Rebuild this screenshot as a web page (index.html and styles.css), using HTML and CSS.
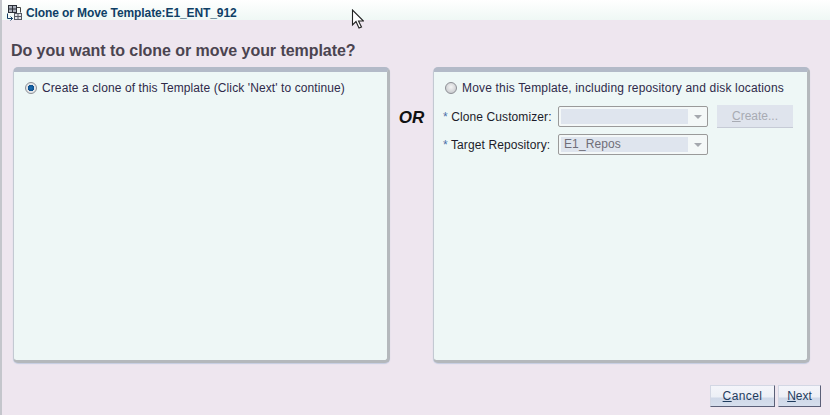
FILE: index.html
```html
<!DOCTYPE html>
<html lang="en">
<head>
    <meta charset="UTF-8">
    <title>Clone or Move Template</title>
    <link rel="stylesheet" href="styles.css">
</head>
<body>
    <div class="dialog">
        <div class="title-bar">
            <svg class="title-icon" width="17" height="16" viewBox="0 0 17 16">
                <rect x="2.5" y="0.5" width="8" height="7" fill="#aab0bb" stroke="#2b2f38"/>
                <path d="M2.5 4h8M6.5 .5v7" stroke="#2b2f38" fill="none"/>
                <rect x="8.5" y="8.5" width="7" height="6" fill="#e4e6ea" stroke="#555a64"/>
                <path d="M8.5 11.5h7M12 8.5v6" stroke="#555a64" fill="none"/>
                <path d="M11 2.5h3.5v5" stroke="#444" fill="none"/>
                <path d="M1.5 8.5v5h5M4.5 11.5l2 2-2 2" stroke="#123c66" fill="none"/>
            </svg>
            <span class="title-text">Clone or Move Template:E1_ENT_912</span>
        </div>

        <div class="content">
            <h1 class="question">Do you want to clone or move your template?</h1>

            <div class="panels">
                <div class="panel">
                    <label class="radio-row">
                        <span class="radio radio-on"></span>
                        Create a clone of this Template (Click 'Next' to continue)
                    </label>
                </div>

                <div class="or-label">OR</div>

                <div class="panel">
                    <label class="radio-row radio-row-move">
                        <span class="radio"></span>
                        Move this Template, including repository and disk locations
                    </label>
                    <div class="form-grid">
                        <div class="field-label"><span class="req">*</span> Clone Customizer:</div>
                        <div class="select"><span class="select-value"></span><span class="select-arrow"></span></div>
                        <button class="create-btn" disabled><u>C</u>reate...</button>
                        <div class="field-label"><span class="req">*</span> Target Repository:</div>
                        <div class="select"><span class="select-value">E1_Repos</span><span class="select-arrow"></span></div>
                    </div>
                </div>
            </div>

            <div class="footer">
                <button class="btn btn-cancel"><u>C</u>ancel</button>
                <button class="btn btn-next"><u>N</u>ext</button>
            </div>
        </div>
    </div>

    <!-- mouse pointer caught in the capture -->
    <svg class="cursor" width="13" height="20" viewBox="0 0 13 20">
        <path d="M1.5 1v15l3.5-3.5 3 6.5 2.5-1-3-6h5z" fill="#fff" stroke="#222" stroke-width="1.1"/>
    </svg>
</body>
</html>
```

FILE: styles.css
```css
/* base */
html, body {
    margin: 0;
    padding: 0;
    height: 100%;
    overflow: hidden;
}
body {
    font-family: 'Liberation Sans', Arial, sans-serif;
    font-size: 12px;
    letter-spacing: 0.1px;
    color: #222;
    background-color: #eee6ef;
}
.dialog {
    height: 415px;
    border-left: 2px solid #c4c6cc;
    box-sizing: border-box;
    display: flex;
    flex-direction: column;
}

/* title bar */
.title-bar {
    height: 20px;
    flex: none;
    box-sizing: border-box;
    padding: 5px 0 0 4px;
    display: flex;
    align-items: center;
    gap: 3px;
    background: linear-gradient(#ffffff, #eff8f5);
}
.title-icon {
    flex: none;
}
.title-text {
    font-size: 12px;
    letter-spacing: -0.1px;
    font-weight: bold;
    color: #0f3f66;
}

/* content */
.content {
    flex: 1;
    display: flex;
    flex-direction: column;
    padding: 0 9px 0 9px;
}
.question {
    margin: 21px 0 7px 0;
    height: 19px;
    line-height: 19px;
    font-size: 16px;
    letter-spacing: -0.05px;
    font-weight: bold;
    color: #4b4450;
}

/* panels */
.panels {
    display: flex;
    margin-left: 2px;
}
.panel {
    width: 377px;
    height: 296px;
    box-sizing: border-box;
    padding: 9px 0 0 10px;
    background-color: #eef7f6;
    border: 1px solid #c3c9d2;
    border-top: 5px solid #b3bac8;
    border-right: 3px solid #b4b8bc;
    border-bottom: 3px solid #b4b8bc;
    border-radius: 5px;
    box-shadow: 0 1px 1px #c4cde2;
}
.or-label {
    width: 43px;
    padding-top: 41px;
    text-align: center;
    font-size: 17px;
    font-weight: bold;
    font-style: italic;
    color: #111;
}
.radio-row {
    display: flex;
    align-items: center;
    gap: 5px;
    height: 14px;
    color: #2f2a4a;
}
.radio-row-move {
    letter-spacing: 0.17px;
}
.radio {
    width: 12px;
    height: 12px;
    margin-left: 1px;
    box-sizing: border-box;
    border-radius: 50%;
    border: 1px solid #8d8f95;
    background: radial-gradient(circle at 50% 40%, #f4f4f4, #bfc1c5);
}
.radio-on {
    background: radial-gradient(circle, #1a6fb5 0, #0c4f8c 3px, #e3e5e8 3.5px);
}

/* form */
.form-grid {
    display: grid;
    grid-template-columns: 115px 150px auto;
    grid-template-rows: 21px 21px;
    row-gap: 7px;
    margin: 11px 0 0 -1px;
    align-items: center;
    white-space: nowrap;
}
.field-label {
    color: #1c1c2a;
}
.req {
    color: #4a6ea8;
}
.select {
    height: 21px;
    box-sizing: border-box;
    border: 1px solid #9a9a9a;
    border-radius: 2px;
    background-color: #f4f8f8;
    display: flex;
    align-items: center;
    padding: 2px;
}
.select-value {
    width: 127px;
    height: 15px;
    line-height: 15px;
    padding-left: 3px;
    box-sizing: border-box;
    background-color: #dfe5ee;
    color: #6f6e78;
}
.select-arrow {
    width: 0;
    height: 0;
    margin-left: 6px;
    border-left: 4px solid transparent;
    border-right: 4px solid transparent;
    border-top: 4px solid #a5a8ae;
}
.create-btn {
    width: 76px;
    height: 23px;
    margin-left: 9px;
    padding: 0;
    border: none;
    border-bottom: 1px solid #c6cbd6;
    background-color: #dfe4ed;
    color: #a8abb3;
    font-family: inherit;
    font-size: 12px;
}

/* footer buttons */
.footer {
    display: flex;
    justify-content: flex-end;
    gap: 3px;
    margin-top: 22px;
}
.btn {
    height: 22px;
    padding: 0;
    border: 1px solid #d3d7e4;
    border-right: 1px solid #5b6078;
    border-bottom: 1px solid #5b6078;
    background: linear-gradient(#f4f5fa 0, #eceff6 55%, #cfd8e8 60%, #d6dfed 100%);
    color: #1f3c5e;
    font-family: inherit;
    font-size: 12px;
}
.btn-cancel {
    width: 65px;
    letter-spacing: 0.4px;
}
.btn-next {
    width: 43px;
}

/* pointer */
.cursor {
    position: absolute;
    left: 351px;
    top: 9px;
}
```
